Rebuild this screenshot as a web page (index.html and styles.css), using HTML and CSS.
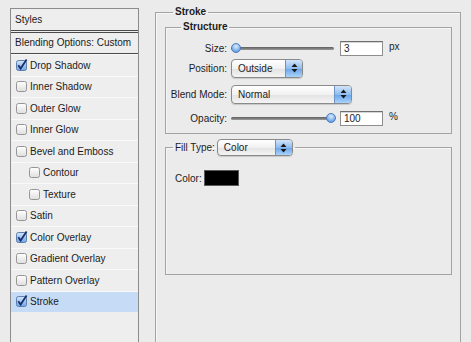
FILE: index.html
```html
<!DOCTYPE html>
<html lang="en">
  <head>
    <meta charset="UTF-8" />
    <meta name="viewport" content="width=device-width, initial-scale=1.0" />
    <title>Layer Style - Stroke</title>
    <link rel="stylesheet" href="styles.css">
  </head>
  <body>
    <svg class="defs" width="0" height="0">
      <defs>
        <linearGradient id="cb-off" x1="0" y1="0" x2="0" y2="1">
          <stop offset="0" stop-color="#ffffff" />
          <stop offset="1" stop-color="#dedede" />
        </linearGradient>
        <linearGradient id="cb-on" x1="0" y1="0" x2="0" y2="1">
          <stop offset="0" stop-color="#d4e6fb" />
          <stop offset="1" stop-color="#6fa6e6" />
        </linearGradient>
      </defs>
    </svg>

    <div class="window">
      <!-- styles list -->
      <div class="styles-list">
        <div class="list-head">Styles</div>
        <div class="list-blend">Blending Options: Custom</div>
        <ul class="effects">
          <li class="effect"><svg class="cb" width="11" height="11" viewBox="0 0 11 11"><rect x=".5" y=".5" width="10" height="10" rx="2" fill="url(#cb-on)" stroke="#5c7fae"/><path d="M2.3 5.2 L4.6 8.6 L10.6 -0.6" fill="none" stroke="#1b2f6b" stroke-width="1.8"/></svg>Drop Shadow</li>
          <li class="effect"><svg class="cb" width="11" height="11" viewBox="0 0 11 11"><rect x=".5" y=".5" width="10" height="10" rx="2" fill="url(#cb-off)" stroke="#959595"/></svg>Inner Shadow</li>
          <li class="effect"><svg class="cb" width="11" height="11" viewBox="0 0 11 11"><rect x=".5" y=".5" width="10" height="10" rx="2" fill="url(#cb-off)" stroke="#959595"/></svg>Outer Glow</li>
          <li class="effect"><svg class="cb" width="11" height="11" viewBox="0 0 11 11"><rect x=".5" y=".5" width="10" height="10" rx="2" fill="url(#cb-off)" stroke="#959595"/></svg>Inner Glow</li>
          <li class="effect"><svg class="cb" width="11" height="11" viewBox="0 0 11 11"><rect x=".5" y=".5" width="10" height="10" rx="2" fill="url(#cb-off)" stroke="#959595"/></svg>Bevel and Emboss</li>
          <li class="effect sub"><svg class="cb" width="11" height="11" viewBox="0 0 11 11"><rect x=".5" y=".5" width="10" height="10" rx="2" fill="url(#cb-off)" stroke="#959595"/></svg>Contour</li>
          <li class="effect sub"><svg class="cb" width="11" height="11" viewBox="0 0 11 11"><rect x=".5" y=".5" width="10" height="10" rx="2" fill="url(#cb-off)" stroke="#959595"/></svg>Texture</li>
          <li class="effect"><svg class="cb" width="11" height="11" viewBox="0 0 11 11"><rect x=".5" y=".5" width="10" height="10" rx="2" fill="url(#cb-off)" stroke="#959595"/></svg>Satin</li>
          <li class="effect"><svg class="cb" width="11" height="11" viewBox="0 0 11 11"><rect x=".5" y=".5" width="10" height="10" rx="2" fill="url(#cb-on)" stroke="#5c7fae"/><path d="M2.3 5.2 L4.6 8.6 L10.6 -0.6" fill="none" stroke="#1b2f6b" stroke-width="1.8"/></svg>Color Overlay</li>
          <li class="effect"><svg class="cb" width="11" height="11" viewBox="0 0 11 11"><rect x=".5" y=".5" width="10" height="10" rx="2" fill="url(#cb-off)" stroke="#959595"/></svg>Gradient Overlay</li>
          <li class="effect"><svg class="cb" width="11" height="11" viewBox="0 0 11 11"><rect x=".5" y=".5" width="10" height="10" rx="2" fill="url(#cb-off)" stroke="#959595"/></svg>Pattern Overlay</li>
          <li class="effect selected"><svg class="cb" width="11" height="11" viewBox="0 0 11 11"><rect x=".5" y=".5" width="10" height="10" rx="2" fill="url(#cb-on)" stroke="#5c7fae"/><path d="M2.3 5.2 L4.6 8.6 L10.6 -0.6" fill="none" stroke="#1b2f6b" stroke-width="1.8"/></svg>Stroke</li>
        </ul>
      </div>

      <!-- stroke options -->
      <fieldset class="panel">
        <legend class="panel-title">Stroke</legend>

        <fieldset class="group structure">
          <legend class="group-title">Structure</legend>

          <div class="row">
            <label class="row-label">Size:</label>
            <div class="slider"><span class="knob" style="left: 0px"></span></div>
            <span class="num-input">3</span>
            <span class="unit">px</span>
          </div>

          <div class="row">
            <label class="row-label">Position:</label>
            <span class="popup popup-position">
              <span class="popup-text">Outside</span>
              <span class="stepper"><svg width="7" height="10" viewBox="0 0 7 10"><path d="M3.5 0.5 L6.5 4 L0.5 4 Z M3.5 9.5 L6.5 6 L0.5 6 Z" fill="#1a1a1a"/></svg></span>
            </span>
          </div>

          <div class="row row-blend">
            <label class="row-label">Blend Mode:</label>
            <span class="popup popup-blend">
              <span class="popup-text">Normal</span>
              <span class="stepper"><svg width="7" height="10" viewBox="0 0 7 10"><path d="M3.5 0.5 L6.5 4 L0.5 4 Z M3.5 9.5 L6.5 6 L0.5 6 Z" fill="#1a1a1a"/></svg></span>
            </span>
          </div>

          <div class="row row-opacity">
            <label class="row-label">Opacity:</label>
            <div class="slider"><span class="knob" style="left: 95px"></span></div>
            <span class="num-input">100</span>
            <span class="unit">%</span>
          </div>
        </fieldset>

        <fieldset class="group fill">
          <legend class="fill-title">
            <span>Fill Type:</span>
            <span class="popup popup-fill">
              <span class="popup-text">Color</span>
              <span class="stepper"><svg width="7" height="10" viewBox="0 0 7 10"><path d="M3.5 0.5 L6.5 4 L0.5 4 Z M3.5 9.5 L6.5 6 L0.5 6 Z" fill="#1a1a1a"/></svg></span>
            </span>
          </legend>
          <div class="fill-body">
            <div class="color-row">
              <span>Color:</span>
              <span class="swatch"></span>
            </div>
          </div>
        </fieldset>
      </fieldset>
    </div>
  </body>
</html>
```

FILE: styles.css
```css
body {
  margin: 0;
  height: 342px;
  overflow: hidden;
  background-color: #ebebeb;
  font-family: "Liberation Sans", Arial, sans-serif;
  font-size: 10px;
  color: #1c1c1c;
}
.defs {
  position: absolute;
}
.window {
  display: flex;
  padding-left: 10px;
}

/* styles list */
.styles-list {
  width: 127px;
  height: 334px;
  margin-top: 8px;
  border: 1px solid #8c8c8c;
  border-bottom: none;
  background-color: #eeeeee;
}
.list-head {
  height: 21px;
  line-height: 21px;
  padding-left: 4px;
  border-bottom: 3px double #4a4a4a;
}
.list-blend {
  height: 20px;
  line-height: 20px;
  padding-left: 4px;
  border-bottom: 1px solid #4a4a4a;
}
.effects {
  list-style: none;
  margin: 0;
  padding: 0;
}
.effect {
  display: flex;
  align-items: center;
  box-sizing: border-box;
  height: 21.5px;
  padding-left: 5px;
  border-top: 1px solid #f9f9f9;
}
.effect.sub {
  padding-left: 18px;
}
.effect.selected {
  background-color: #c6dbf5;
}
.cb {
  flex-shrink: 0;
  margin-right: 3px;
  overflow: visible;
}

/* stroke panel */
.panel {
  box-sizing: border-box;
  width: 306px;
  height: 336px;
  margin: 6px 0 0 16px;
  padding: 0;
  border: 1px solid #a3a3a3;
  border-bottom: none;
  box-shadow: inset 1px 1px 0 #f7f7f7;
}
.panel-title,
.group-title {
  margin-left: 17px;
  padding: 0 2px;
  line-height: 12px;
  font-weight: bold;
}
.group {
  margin: 3px 8px 0 9px;
  padding: 0;
  border: 1px solid #a3a3a3;
  box-shadow: inset 1px 1px 0 #f7f7f7;
}
.group-title {
  margin-left: 15px;
}
.structure {
  padding: 5px 0 5px;
}
.row {
  display: flex;
  align-items: center;
  height: 20px;
}
.row-blend {
  margin-top: 6px;
}
.row-opacity {
  margin-top: 4px;
}
.row-label {
  width: 61px;
  margin-right: 4px;
  text-align: right;
}
.slider {
  position: relative;
  width: 103px;
  height: 3px;
  margin-right: 6px;
  border-radius: 2px;
  background: linear-gradient(#5e5e5e, #9b9b9b);
}
.knob {
  position: absolute;
  top: -4px;
  box-sizing: border-box;
  width: 10px;
  height: 10px;
  border: 1px solid #4b7bbd;
  border-radius: 50%;
  background: radial-gradient(circle at 50% 30%, #dcecfd, #7fb1ec 60%, #4f8ad8);
}
.num-input {
  box-sizing: border-box;
  width: 43px;
  height: 15px;
  line-height: 13px;
  padding-left: 3px;
  border: 1px solid #8e8e8e;
  border-top-color: #6e6e6e;
  background-color: #ffffff;
  box-shadow: inset 0 1px 0 #d6d6d6;
}
.unit {
  margin-left: 6px;
  margin-top: -4px;
}

/* popup buttons */
.popup {
  display: inline-flex;
  box-sizing: border-box;
  height: 19px;
  border: 1px solid #8a8a8a;
  border-radius: 4px;
  background: linear-gradient(#ffffff, #f1f1f1 50%, #e2e2e2 51%, #f4f4f4);
  box-shadow: 0 1px 1px rgba(0, 0, 0, 0.15);
  overflow: hidden;
  vertical-align: middle;
}
.popup-text {
  flex: 1;
  padding-left: 6px;
  line-height: 17px;
}
.stepper {
  display: flex;
  align-items: center;
  justify-content: center;
  width: 16px;
  border-left: 1px solid #6e93c6;
  background: linear-gradient(#d2e5fa, #8fbdf0 50%, #6aa4ea 51%, #a9d3fa);
}
.popup-position {
  width: 72px;
}
.popup-blend {
  width: 121px;
}
.popup-fill {
  width: 76px;
  height: 17px;
  margin-left: 2px;
}
.popup-fill .popup-text {
  line-height: 15px;
}

/* fill group */
.fill {
  margin-top: 5px;
}
.fill-title {
  margin-left: 7px;
  padding: 0 2px;
  display: flex;
  align-items: center;
}
.fill-body {
  box-sizing: border-box;
  height: 118px;
  padding: 15px 0 0 9px;
}
.color-row {
  display: flex;
  align-items: center;
  height: 14px;
}
.swatch {
  width: 33px;
  height: 14px;
  margin-left: 3px;
  background-color: #000000;
  box-shadow: 0 0 0 1px #5a5a5a;
}
```
